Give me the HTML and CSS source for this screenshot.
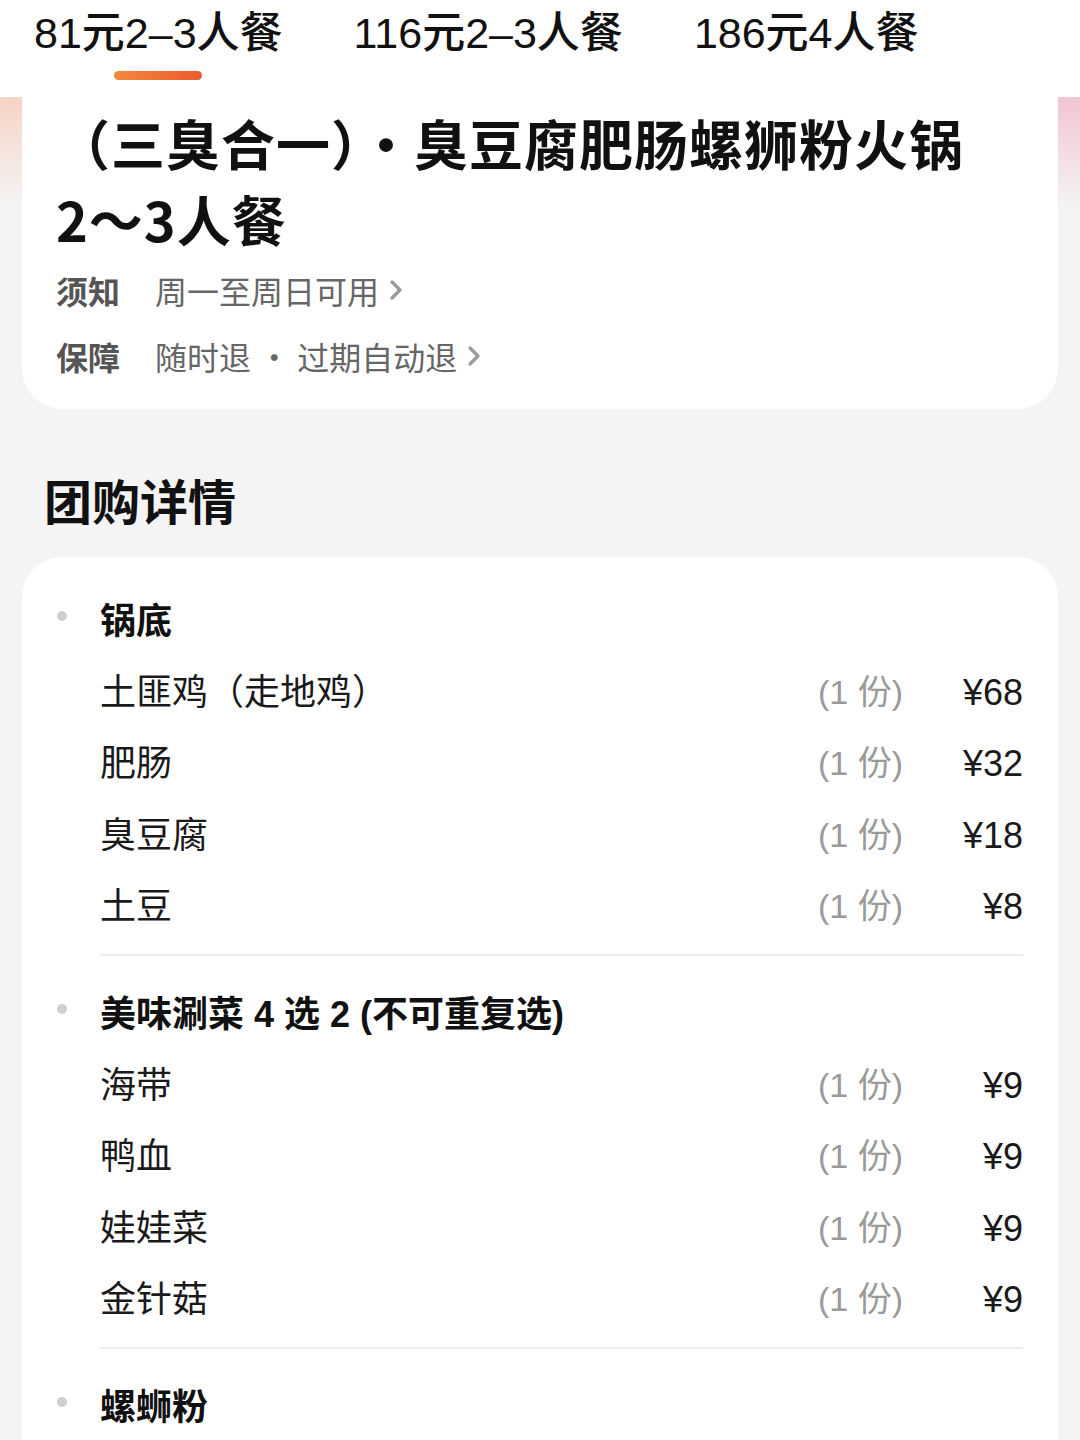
FILE: index.html
```html
<!DOCTYPE html>
<html lang="zh-CN">
<head>
<meta charset="utf-8">
<title>团购详情</title>
<link rel="stylesheet" href="styles.css">
</head>
<body>
<header class="tabs">
  <div class="tab active"><span class="tab-text">81元2–3人餐</span><span class="tab-line"></span></div>
  <div class="tab"><span class="tab-text">116元2–3人餐</span></div>
  <div class="tab"><span class="tab-text">186元4人餐</span></div>
</header>
<main class="page">
  <section class="summary">
    <h1 class="title">（三臭合一）·臭豆腐肥肠螺狮粉火锅<br>2～3人餐</h1>
    <div class="info-row">
      <span class="info-label">须知</span>
      <span class="info-text">周一至周日可用</span>
      <svg class="chev" viewBox="0 0 14 22" width="14" height="22"><path d="M3 3 L11 11 L3 19" fill="none" stroke="#999" stroke-width="3.2" stroke-linecap="round" stroke-linejoin="round"/></svg>
    </div>
    <div class="info-row">
      <span class="info-label">保障</span>
      <span class="info-text">随时退 · 过期自动退</span>
      <svg class="chev" viewBox="0 0 14 22" width="14" height="22"><path d="M3 3 L11 11 L3 19" fill="none" stroke="#999" stroke-width="3.2" stroke-linecap="round" stroke-linejoin="round"/></svg>
    </div>
  </section>

  <h2 class="section-heading">团购详情</h2>

  <section class="detail">
    <div class="group">
      <div class="group-head"><span class="dot"></span><span class="group-title">锅底</span></div>
      <div class="items">
        <span class="name">土匪鸡（走地鸡）</span><span class="qty">(1 份)</span><span class="price">¥68</span>
        <span class="name">肥肠</span><span class="qty">(1 份)</span><span class="price">¥32</span>
        <span class="name">臭豆腐</span><span class="qty">(1 份)</span><span class="price">¥18</span>
        <span class="name">土豆</span><span class="qty">(1 份)</span><span class="price">¥8</span>
      </div>
      <div class="divider"></div>
    </div>
    <div class="group">
      <div class="group-head"><span class="dot"></span><span class="group-title">美味涮菜 4 选 2 (不可重复选)</span></div>
      <div class="items">
        <span class="name">海带</span><span class="qty">(1 份)</span><span class="price">¥9</span>
        <span class="name">鸭血</span><span class="qty">(1 份)</span><span class="price">¥9</span>
        <span class="name">娃娃菜</span><span class="qty">(1 份)</span><span class="price">¥9</span>
        <span class="name">金针菇</span><span class="qty">(1 份)</span><span class="price">¥9</span>
      </div>
      <div class="divider"></div>
    </div>
    <div class="group">
      <div class="group-head"><span class="dot"></span><span class="group-title">螺蛳粉</span></div>
    </div>
  </section>
</main>
</body>
</html>
```
FILE: styles.css
```css
html, body {
  margin: 0;
  padding: 0;
}
body {
  font-family: "Liberation Sans", "Noto Sans CJK SC", sans-serif;
  background: #f4f4f4;
  color: #111;
  width: 1080px;
  height: 1440px;
  overflow: hidden;
}
.tabs {
  height: 97px;
  background: #fff;
  display: flex;
  align-items: flex-start;
  gap: 71px;
  padding-left: 34px;
  position: relative;
  z-index: 2;
}
.tab {
  display: flex;
  flex-direction: column;
  align-items: center;
}
.tab-text {
  font-size: 43px;
  font-weight: 500;
  line-height: 62px;
  padding-top: 2px;
  color: #111;
  white-space: nowrap;
}
.tab-line {
  display: block;
  width: 88px;
  height: 9px;
  margin-top: 7px;
  border-radius: 5px;
  background: linear-gradient(to right, #f2893c, #ec5a2b);
}
.page {
  background:
    linear-gradient(to bottom, rgba(244,244,244,0) 0px, #f4f4f4 110px),
    linear-gradient(to right, #f6d3c6, #f4ebe6 50%, #f1c4d2);
  background-repeat: no-repeat;
  background-color: #f4f4f4;
  padding-bottom: 40px;
}
.summary {
  margin: 0 22px;
  background: #fff;
  border-radius: 0 0 40px 40px;
  padding: 8px 34px 20px 34px;
}
.title {
  margin: 0;
  font-family: "Noto Sans CJK SC", sans-serif;
  font-size: 54px;
  font-weight: 700;
  line-height: 76px;
  letter-spacing: 1px;
  color: #111;
}
.info-row {
  display: flex;
  align-items: center;
  height: 66px;
  font-size: 32px;
  font-family: "Noto Sans CJK SC", sans-serif;
}
.info-label {
  color: #555;
  font-weight: 700;
  width: 99px;
}
.info-text {
  color: #666;
}
.chev {
  margin-left: 10px;
  width: 14px;
  height: 22px;
}
.section-heading {
  margin: 55px 0 23px 44px;
  font-family: "Noto Sans CJK SC", sans-serif;
  font-size: 48px;
  font-weight: 700;
  line-height: 70px;
  color: #111;
}
.detail {
  margin: 0 22px;
  background: #fff;
  border-radius: 40px 40px 0 0;
  padding: 26px 35px 40px 35px;
}
.group-head {
  display: flex;
  align-items: center;
  height: 70px;
}
.group + .group .group-head {
  margin-top: 20px;
}
.dot {
  width: 10px;
  height: 10px;
  border-radius: 50%;
  background: #cfcfcf;
  margin-right: 33px;
  margin-top: -4px;
}
.group-title {
  font-size: 36px;
  font-weight: 700;
  color: #111;
}
.items {
  margin: 3.5px 0 0 43px;
  display: grid;
  grid-template-columns: 1fr auto 120px;
  grid-auto-rows: 71.5px;
  font-size: 36px;
  line-height: 71.5px;
}
.name {
  color: #1a1a1a;
}
.qty {
  color: #9a9a9a;
  font-size: 34px;
  text-align: right;
}
.price {
  color: #1a1a1a;
  text-align: right;
}
.divider {
  margin: 11.5px 0 0 43px;
  height: 2px;
  background: #eeeeee;
}
```
